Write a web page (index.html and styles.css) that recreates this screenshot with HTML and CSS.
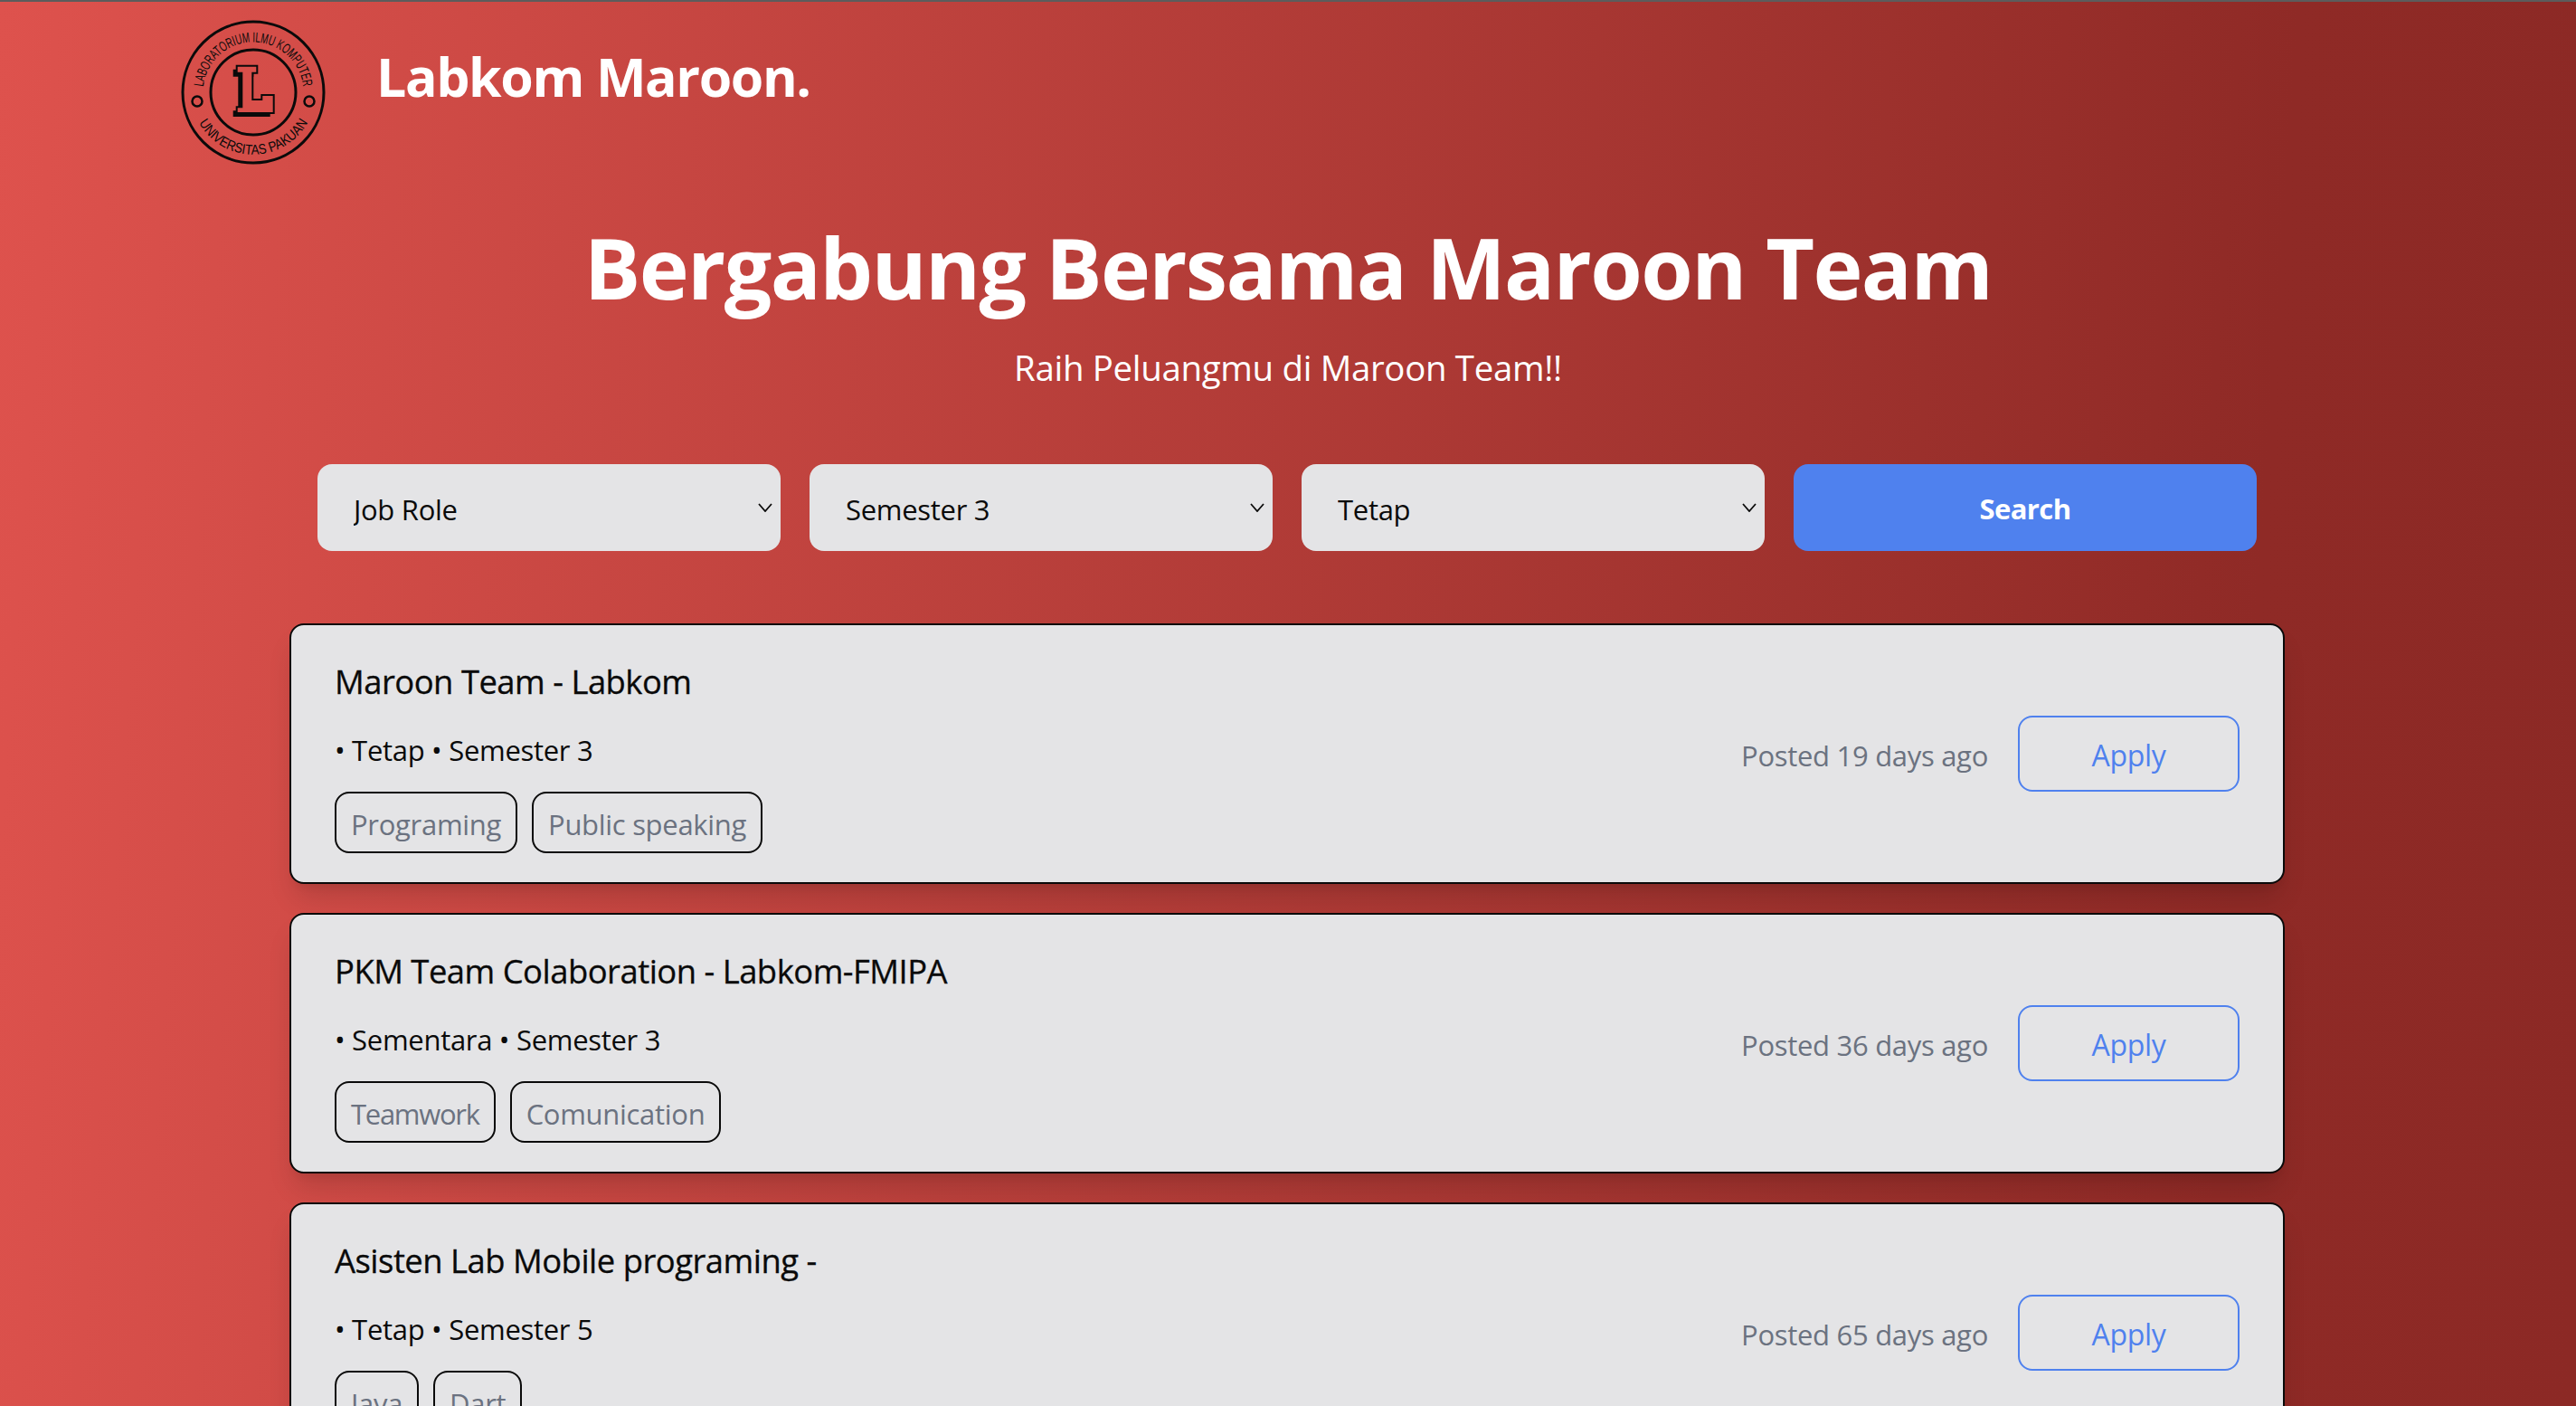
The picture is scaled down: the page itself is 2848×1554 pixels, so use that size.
FILE: index.html
```html
<!DOCTYPE html>
<html lang="id">
<head>
<meta charset="utf-8">
<title>Labkom Maroon</title>
<link rel="stylesheet" href="styles.css">
</head>
<body>
<div class="page">
  <header class="brand">
    <svg class="logo" viewBox="0 0 160 160" aria-label="Logo Laboratorium Ilmu Komputer">
      <defs>
        <path id="arcTop" d="M 24.73 75 A 55.5 55.5 0 0 1 135.27 75"/>
        <path id="arcBottom" d="M 19 112 A 69 69 0 0 0 141 112"/>
      </defs>
      <g fill="none" stroke="#0a0a0a">
        <circle cx="80" cy="80" r="78" stroke-width="3"/>
        <circle cx="80" cy="80" r="47" stroke-width="3"/>
        <circle cx="18" cy="90" r="5.5" stroke-width="2.5"/>
        <circle cx="142" cy="90" r="5.5" stroke-width="2.5"/>
      </g>
      <text class="logo-text"><textPath href="#arcTop" startOffset="1" textLength="162" lengthAdjust="spacingAndGlyphs">LABORATORIUM ILMU KOMPUTER</textPath></text>
      <text class="logo-text"><textPath href="#arcBottom" startOffset="2" textLength="146" lengthAdjust="spacingAndGlyphs">UNIVERSITAS PAKUAN</textPath></text>
      <path class="logo-l-shadow" d="M57.7 54.7H80.3V62.7H75.3V92H85.3V87H98.7V107H57.7V100.3H63.3V62.7H57.7Z"/>
      <path class="logo-l" d="M61.7 50.7H84.3V58.7H79.3V88H89.3V83H102.7V103H61.7V96.3H67.3V58.7H61.7Z"/>
    </svg>
    <div class="brand-name">Labkom Maroon.</div>
  </header>

  <section class="hero">
    <h1 class="hero-title">Bergabung Bersama Maroon Team</h1>
    <p class="hero-sub">Raih Peluangmu di Maroon Team!!</p>
  </section>

  <form class="filters">
    <div class="select-wrap">
      <select class="select"><option>Job Role</option></select>
      <svg class="chevron" viewBox="0 0 16 10"><path d="M1 1l7 8 7-8"/></svg>
    </div>
    <div class="select-wrap">
      <select class="select"><option>Semester 3</option></select>
      <svg class="chevron" viewBox="0 0 16 10"><path d="M1 1l7 8 7-8"/></svg>
    </div>
    <div class="select-wrap">
      <select class="select"><option>Tetap</option></select>
      <svg class="chevron" viewBox="0 0 16 10"><path d="M1 1l7 8 7-8"/></svg>
    </div>
    <button class="search" type="button">Search</button>
  </form>

  <main class="jobs">
    <article class="job">
      <div class="job-info">
        <h2 class="job-title">Maroon Team - Labkom</h2>
        <p class="job-meta">• Tetap • Semester 3</p>
        <div class="tags"><span class="tag">Programing</span><span class="tag">Public speaking</span></div>
      </div>
      <div class="job-side"><span class="posted">Posted 19 days ago</span><button class="apply" type="button">Apply</button></div>
    </article>
    <article class="job">
      <div class="job-info">
        <h2 class="job-title">PKM Team Colaboration - Labkom-FMIPA</h2>
        <p class="job-meta">• Sementara • Semester 3</p>
        <div class="tags"><span class="tag tag-tight">Teamwork</span><span class="tag">Comunication</span></div>
      </div>
      <div class="job-side"><span class="posted">Posted 36 days ago</span><button class="apply" type="button">Apply</button></div>
    </article>
    <article class="job">
      <div class="job-info">
        <h2 class="job-title">Asisten Lab Mobile programing -</h2>
        <p class="job-meta">• Tetap • Semester 5</p>
        <div class="tags"><span class="tag">Java</span><span class="tag">Dart</span></div>
      </div>
      <div class="job-side"><span class="posted">Posted 65 days ago</span><button class="apply" type="button">Apply</button></div>
    </article>
  </main>
</div>
</body>
</html>
```
FILE: styles.css
```css
* { box-sizing: border-box; }
html, body { margin: 0; height: 100%; overflow: hidden; }
body {
  font-family: "Open Sans", "Noto Sans", sans-serif;
  color: #0a0a0a;
}
.page {
  height: 1554px;
  overflow: hidden;
  border-top: 2px solid #5c5c5c;
  background: linear-gradient(94deg, #de524d 0%, #8f2a26 86%, #8c2925 100%);
}
.brand {
  display: flex;
  align-items: flex-start;
  gap: 56px;
  padding: 20px 0 0 200px;
}
.logo { width: 160px; height: 160px; flex: none; }
.logo-text {
  font-family: "Liberation Sans", sans-serif;
  font-size: 15.5px;
  fill: #0a0a0a;
}
.logo-l-shadow { fill: #0a0a0a; }
.logo-l { fill: #d94f4a; stroke: #0a0a0a; stroke-width: 2; }
.brand-name {
  margin-top: 26px;
  font-size: 59px;
  line-height: 72px;
  font-weight: 700;
  letter-spacing: -1.4px;
  color: #fff;
}
.hero { margin-top: 51px; text-align: center; color: #fff; }
.hero-title {
  margin: 0;
  font-size: 93px;
  line-height: 124px;
  font-weight: 700;
  letter-spacing: -1.6px;
}
.hero-sub {
  margin: 21px 0 0;
  font-size: 38.4px;
  line-height: 56px;
  font-weight: 400;
  letter-spacing: -.3px;
}
.filters {
  display: grid;
  grid-template-columns: repeat(4, 512px);
  gap: 32px;
  justify-content: center;
  margin: 79px 2px 0 0;
}
.select-wrap { position: relative; height: 96px; }
.select {
  appearance: none;
  width: 100%;
  height: 100%;
  padding: 3px 40px 0;
  border: 0;
  border-radius: 16px;
  background: #e4e4e6;
  color: #0a0a0a;
  font: 400 31px "Open Sans", sans-serif;
  letter-spacing: -.3px;
}
.chevron {
  position: absolute;
  right: 9px;
  top: 43px;
  width: 16px;
  height: 10px;
  fill: none;
  stroke: #0a0a0a;
  stroke-width: 1.8;
}
.search {
  height: 96px;
  padding: 2px 0 0;
  border: 0;
  border-radius: 16px;
  background: #4f81ee;
  color: #fff;
  font: 700 31px "Open Sans", sans-serif;
  letter-spacing: -.6px;
}
.jobs {
  display: flex;
  flex-direction: column;
  gap: 32px;
  width: 2206px;
  margin: 80px auto 0 320px;
}
.job {
  flex: none;
  display: flex;
  justify-content: space-between;
  align-items: center;
  height: 288px;
  padding: 32px 48px;
  border: 2px solid #0a0a0a;
  border-radius: 16px;
  background: #e4e4e6;
  box-shadow: 0 20px 30px -6px rgba(0,0,0,.14), 0 8px 12px -8px rgba(0,0,0,.1);
}
.job-title {
  margin: 0;
  font-size: 36.4px;
  line-height: 60px;
  font-weight: 500;
  letter-spacing: -.5px;
  -webkit-text-stroke: .3px #0a0a0a;
}
.job-meta {
  margin: 20px 0 0;
  font-size: 31px;
  line-height: 52px;
  letter-spacing: -.3px;
}
.tags { display: flex; gap: 16px; margin-top: 20px; }
.tag {
  padding: 10px 16px 6px;
  border: 2px solid #0a0a0a;
  border-radius: 16px;
  font-size: 31px;
  line-height: 48px;
  letter-spacing: -.3px;
  color: #6b7280;
}
.tag-tight { letter-spacing: -1.3px; }
.job-side { display: flex; align-items: center; gap: 33px; }
.posted { padding-top: 3px; font-size: 31px; line-height: 48px; letter-spacing: -.3px; color: #6b7280; }
.apply {
  width: 245px;
  height: 84px;
  padding: 3px 0 0;
  border: 2px solid #4f81ee;
  border-radius: 16px;
  background: transparent;
  color: #4f81ee;
  font: 400 32px "Open Sans", sans-serif;
  letter-spacing: -.3px;
}
```
